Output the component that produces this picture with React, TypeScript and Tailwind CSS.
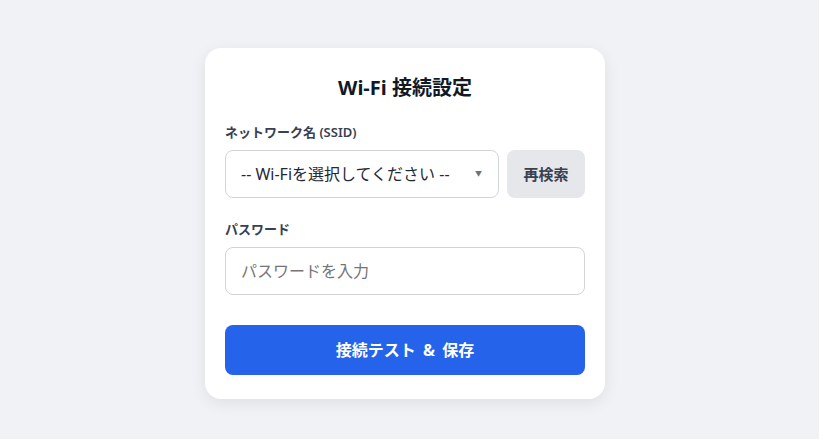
import { useState } from 'react'

export default function App() {
  const [ssid, setSsid] = useState('')
  const [password, setPassword] = useState('')

  return (
    <div
      className="flex min-h-screen w-full justify-center bg-[#f0f2f5] pt-12 pr-[9px]"
      style={{ fontFamily: '"Noto Sans", "Noto Sans CJK JP", sans-serif' }}
    >
      <div className="h-fit w-[400px] rounded-2xl bg-white px-5 pt-6 pb-6 shadow-[0_4px_16px_rgba(0,0,0,0.08)]">
        <h1 className="text-center text-xl leading-8 font-bold text-[#111827]">Wi-Fi 接続設定</h1>

        {/* SSID */}
        <label className="mt-[18px] block text-[13px] leading-5 font-semibold text-[#374151]">
          ネットワーク名 (SSID)
        </label>
        <div className="mt-2 flex gap-2">
          <div className="relative flex-1">
            <select
              value={ssid}
              onChange={e => setSsid(e.target.value)}
              className="h-12 w-full appearance-none rounded-lg border border-[#d1d5db] bg-white pl-[15px] pr-8 text-base text-[#1f2937] outline-none"
            >
              <option value="">-- Wi-Fiを選択してください --</option>
            </select>
            <span className="pointer-events-none absolute top-1/2 right-[17px] -translate-y-1/2 text-[7px] text-[#6b7280]">
              ▼
            </span>
          </div>
          <button className="h-12 w-[78px] rounded-lg bg-[#e5e7eb] text-[15px] font-semibold text-[#374151]">
            再検索
          </button>
        </div>

        {/* Password */}
        <label className="mt-[21px] block text-[13px] leading-5 font-semibold text-[#374151]">パスワード</label>
        <input
          type="password"
          value={password}
          onChange={e => setPassword(e.target.value)}
          placeholder="パスワードを入力"
          className="mt-2 h-12 w-full rounded-lg border border-[#d1d5db] px-[15px] text-base text-[#1f2937] outline-none placeholder:text-[#757575]"
        />

        <button className="mt-[30px] h-[50px] w-full rounded-lg bg-[#2563eb] text-base font-bold text-white [word-spacing:3px]">
          接続テスト &amp; 保存
        </button>
      </div>
    </div>
  )
}
